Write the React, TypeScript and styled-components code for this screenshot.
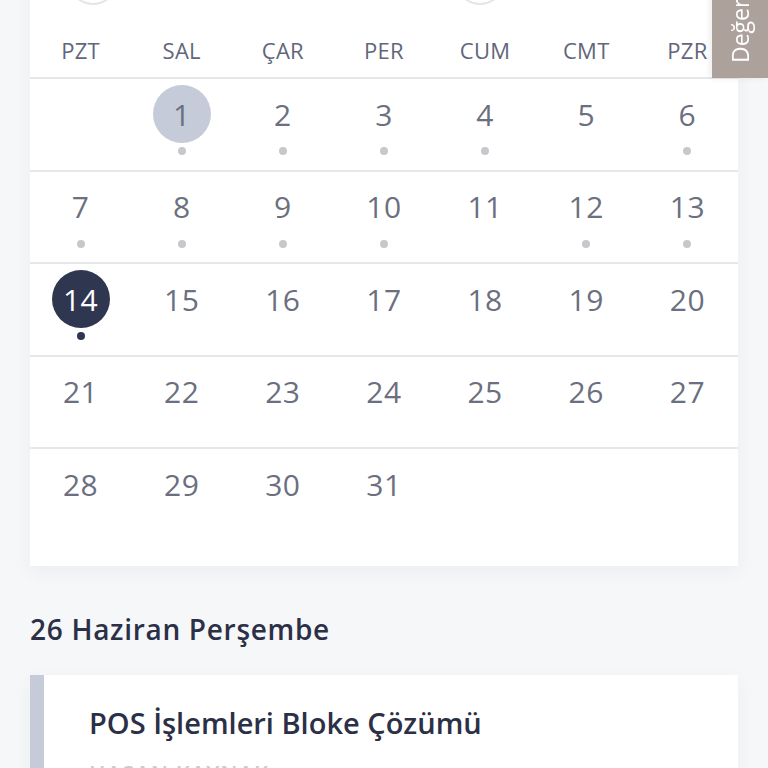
import styled, { createGlobalStyle } from 'styled-components';

const GlobalStyle = createGlobalStyle`
  html, body {
    margin: 0;
    padding: 0;
    background: #f6f7f9;
    font-family: 'Open Sans', 'Noto Sans', sans-serif;
    overflow: hidden;
  }
`;

type Day = { n: number; dot?: 'light' | 'dark'; mark?: 'soft' | 'today' };

const weeks: (Day | null)[][] = [
  [null, { n: 1, dot: 'light', mark: 'soft' }, { n: 2, dot: 'light' }, { n: 3, dot: 'light' }, { n: 4, dot: 'light' }, { n: 5 }, { n: 6, dot: 'light' }],
  [{ n: 7, dot: 'light' }, { n: 8, dot: 'light' }, { n: 9, dot: 'light' }, { n: 10, dot: 'light' }, { n: 11 }, { n: 12, dot: 'light' }, { n: 13, dot: 'light' }],
  [{ n: 14, dot: 'dark', mark: 'today' }, { n: 15 }, { n: 16 }, { n: 17 }, { n: 18 }, { n: 19 }, { n: 20 }],
  [{ n: 21 }, { n: 22 }, { n: 23 }, { n: 24 }, { n: 25 }, { n: 26 }, { n: 27 }],
  [{ n: 28 }, { n: 29 }, { n: 30 }, { n: 31 }, null, null, null],
];

const dayNames = ['PZT', 'SAL', 'ÇAR', 'PER', 'CUM', 'CMT', 'PZR'];

const App = () => {
  return (
    <Page>
      <GlobalStyle />
      <CalendarCard>
        <Nav>
          <NavButton />
          <MonthTitle>Haziran 2024</MonthTitle>
          <NavButton />
        </Nav>
        <HeaderRow>
          {dayNames.map((d) => (
            <HeaderCell key={d}>{d}</HeaderCell>
          ))}
        </HeaderRow>
        {weeks.map((week, i) => (
          <WeekRow key={i}>
            {week.map((day, j) => (
              <Cell key={j}>
                {day && (
                  <>
                    <Num $mark={day.mark}>{day.n}</Num>
                    <Dot $kind={day.dot} />
                  </>
                )}
              </Cell>
            ))}
          </WeekRow>
        ))}
      </CalendarCard>

      <DateHeading>26 Haziran Perşembe</DateHeading>

      <EventCard>
        <EventTitle>POS İşlemleri Bloke Çözümü</EventTitle>
        <EventMeta>HASAN KAYNAK</EventMeta>
      </EventCard>

      <FeedbackTab>Değerlendir</FeedbackTab>
    </Page>
  );
};

const Page = styled.div`
  padding: 0 30px;
  margin-top: -62px;
`;

const CalendarCard = styled.div`
  background: #fff;
  box-shadow: 0 6px 18px rgba(40, 50, 80, 0.05);
  padding-bottom: 26px;
`;

const Nav = styled.div`
  display: flex;
  align-items: flex-start;
  height: 85px;
  padding: 17px 0 0 38px;
  box-sizing: border-box;
`;

const NavButton = styled.div`
  width: 46px;
  height: 46px;
  border-radius: 50%;
  border: 2px solid #e4e6ea;
`;

const MonthTitle = styled.div`
  width: 337px;
  line-height: 36px;
  text-align: center;
  color: #2c3046;
  font-size: 22px;
  font-weight: 700;
`;

const HeaderRow = styled.div`
  display: grid;
  grid-template-columns: repeat(7, 1fr);
  height: 54px;
  align-items: center;
`;

const HeaderCell = styled.div`
  text-align: center;
  font-size: 22px;
  color: #62667a;
  letter-spacing: 0.3px;
`;

const WeekRow = styled.div`
  display: grid;
  grid-template-columns: repeat(7, 1fr);
  height: 90.5px;
  border-top: 2px solid #e6e7eb;
`;

const Cell = styled.div`
  display: flex;
  flex-direction: column;
  align-items: center;
  padding-top: 6px;
`;

const Num = styled.div<{ $mark?: 'soft' | 'today' }>`
  width: 58px;
  height: 58px;
  border-radius: 50%;
  display: flex;
  align-items: center;
  justify-content: center;
  font-size: 30px;
  letter-spacing: 0.5px;
  color: ${(p) => (p.$mark === 'today' ? '#fff' : '#6b6f80')};
  background: ${(p) =>
    p.$mark === 'today' ? '#2f3650' : p.$mark === 'soft' ? '#c6cbd9' : 'transparent'};
`;

const Dot = styled.div<{ $kind?: 'light' | 'dark' }>`
  width: 8px;
  height: 8px;
  border-radius: 50%;
  margin-top: 4px;
  background: ${(p) =>
    p.$kind === 'dark' ? '#2f3650' : p.$kind === 'light' ? '#c7c8cc' : 'transparent'};
`;

const DateHeading = styled.h2`
  margin: 44px 0 0;
  height: 65px;
  font-size: 28px;
  font-weight: 600;
  letter-spacing: 0.7px;
  color: #2c3046;
`;

const EventCard = styled.div`
  background: #fff;
  border-left: 14px solid #c6cbd9;
  padding: 28px 45px 20px;
  box-shadow: 0 6px 18px rgba(40, 50, 80, 0.05);
`;

const EventTitle = styled.div`
  font-size: 29px;
  font-weight: 600;
  color: #2c3046;
`;

const EventMeta = styled.div`
  margin-top: 16px;
  font-size: 22px;
  font-weight: 600;
  letter-spacing: 1px;
  color: #c9cbd3;
`;

const FeedbackTab = styled.div`
  position: fixed;
  right: 0;
  top: -120px;
  width: 56px;
  height: 198px;
  background: #ada19c;
  color: #fff;
  font-size: 23px;
  writing-mode: vertical-rl;
  transform: rotate(180deg);
  display: flex;
  align-items: center;
  padding-top: 15px;
  box-sizing: border-box;
  box-shadow: 2px 0 6px rgba(0, 0, 0, 0.08);
`;

export default App;
